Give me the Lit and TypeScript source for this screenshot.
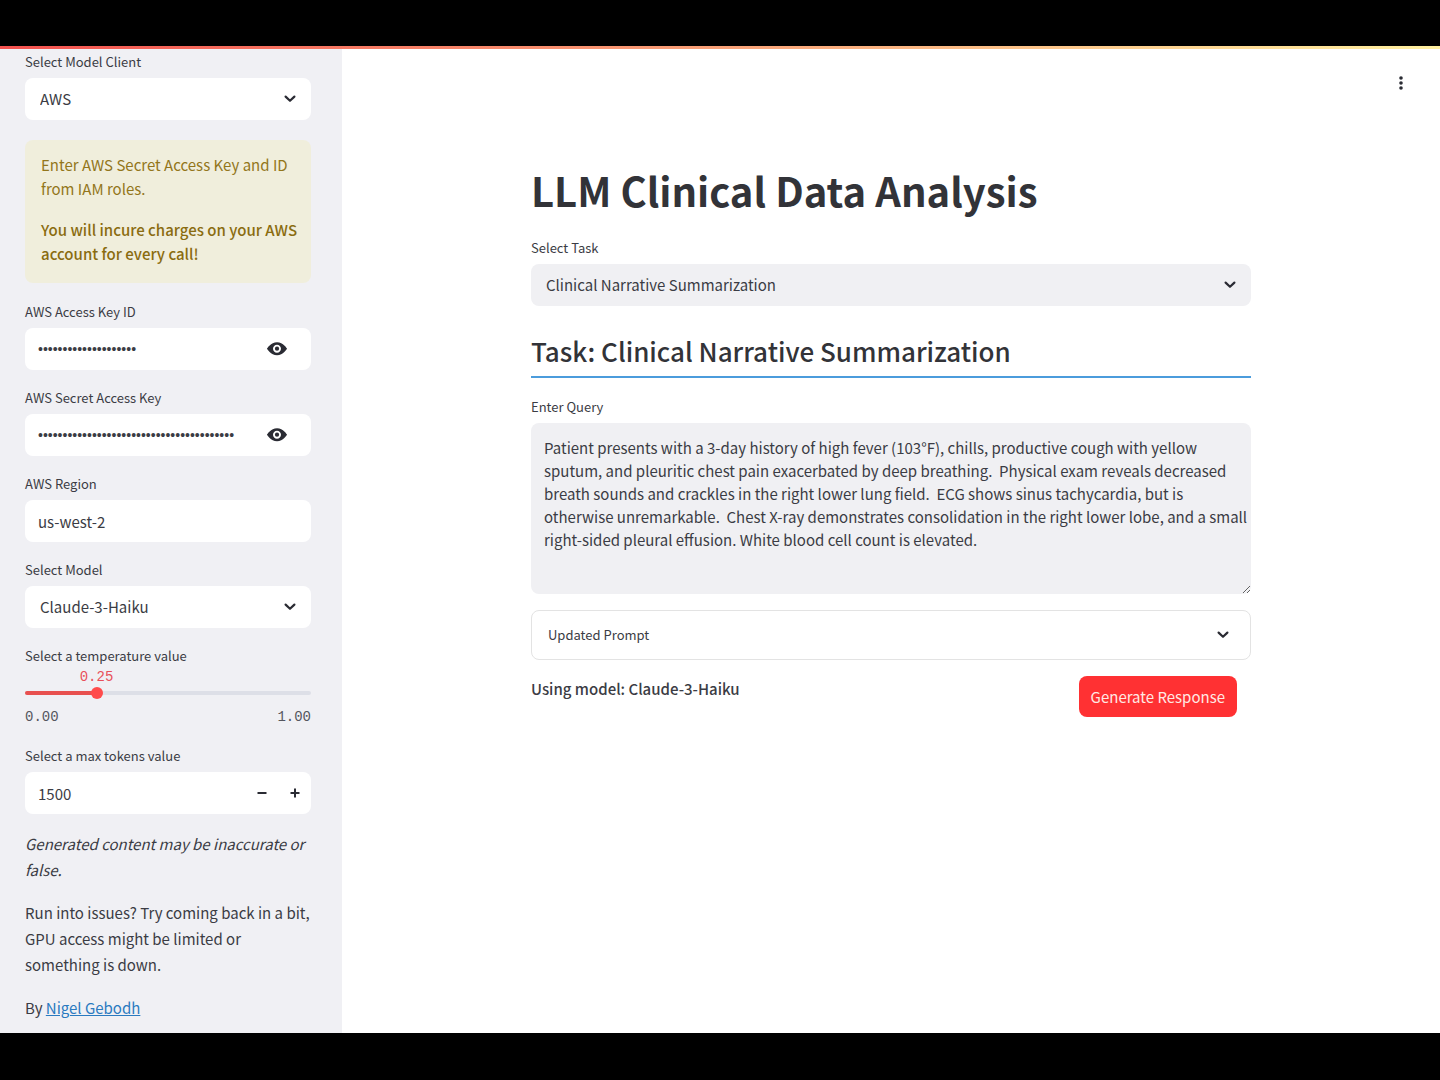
import { LitElement, html, css, svg } from "lit";
import { customElement, property, state } from "lit/decorators.js";

const chevron = html`<svg class="chevron" viewBox="0 0 12 8" width="12" height="8" aria-hidden="true">
  <path d="M1.6 1.6 L6 5.8 L10.4 1.6" fill="none" stroke="currentColor" stroke-width="2.2" stroke-linecap="round" stroke-linejoin="round" />
</svg>`;

const eye = html`<svg viewBox="0 0 8 8" width="20" height="20" aria-hidden="true">
  <path fill="currentColor" fill-rule="evenodd" d="M4.03 1.3C1.5 1.3 0 3.85 0 3.85s1.5 2.6 4.03 2.6C6.5 6.45 8 3.85 8 3.85S6.5 1.3 4.03 1.3zM4 2.25c.88 0 1.6.72 1.6 1.6S4.88 5.45 4 5.45 2.4 4.73 2.4 3.85 3.12 2.25 4 2.25z" />
  <circle cx="4" cy="3.85" r="0.85" fill="currentColor" />
</svg>`;

const base = css`
  * {
    box-sizing: border-box;
  }
  :host {
    display: block;
    color: #3b3c44;
    font-family: "Noto Sans CJK SC", "Open Sans", sans-serif;
    font-size: 15px;
    line-height: 24px;
  }
  input,
  select,
  textarea,
  button {
    font: inherit;
    color: inherit;
    margin: 0;
    border: 0;
    background: none;
    border-radius: 8px;
  }
  button {
    cursor: pointer;
  }
  svg {
    color: #2a2b33;
  }
  .label {
    display: block;
    font-size: 13px;
    line-height: 22px;
    margin-bottom: 5px;
  }
  .box {
    display: flex;
    align-items: center;
    height: 42px;
    border-radius: 8px;
    background: var(--field, #ffffff);
  }
`;

@customElement("select-field")
export class SelectField extends LitElement {
  @property() label = "";
  @property({ attribute: false }) options: string[] = [];

  static styles = [
    base,
    css`
      .box {
        display: grid;
        grid-template-columns: 1fr 12px;
        padding-right: 15px;
      }
      select {
        grid-area: 1 / 1 / 2 / 3;
        width: 100%;
        height: 42px;
        padding: 0 15px;
        appearance: none;
      }
      .chevron {
        grid-area: 1 / 2 / 2 / 3;
        pointer-events: none;
      }
    `,
  ];

  render() {
    return html`<label class="label" for="control">${this.label}</label>
      <div class="box">
        <select id="control">
          ${this.options.map((o) => html`<option>${o}</option>`)}
        </select>
        ${chevron}
      </div>`;
  }
}

@customElement("text-field")
export class TextField extends LitElement {
  @property() label = "";
  @property() value = "";
  @property({ type: Boolean }) secret = false;
  @state() private shown = false;

  static styles = [
    base,
    css`
      input {
        flex: 1;
        min-width: 0;
        height: 42px;
        padding: 0 13px;
      }
      .masked {
        font-family: "Liberation Sans", sans-serif;
        font-size: 14px;
      }
      .reveal {
        display: grid;
        place-items: center;
        width: 38px;
        height: 42px;
        margin-right: 15px;
        padding: 0;
      }
    `,
  ];

  render() {
    const masked = this.secret && !this.shown;
    return html`<label class="label" for="control">${this.label}</label>
      <div class="box">
        <input
          id="control"
          class=${masked ? "masked" : ""}
          type=${masked ? "password" : "text"}
          autocomplete="off"
          .value=${this.value}
        />
        ${this.secret
          ? html`<button class="reveal" type="button" aria-label="Show password text" @click=${() => (this.shown = !this.shown)}>
              ${eye}
            </button>`
          : null}
      </div>`;
  }
}

@customElement("slider-field")
export class SliderField extends LitElement {
  @property() label = "";
  @property({ type: Number }) value = 0;

  static styles = [
    base,
    css`
      .label {
        margin-bottom: 0;
      }
      .body {
        padding: 1px 0 2px;
        font-family: "Liberation Mono", monospace;
        font-size: 14px;
        line-height: 18px;
      }
      .values {
        position: relative;
        height: 18px;
      }
      .value {
        position: absolute;
        transform: translateX(-50%);
        color: #e8505a;
      }
      .rail {
        display: grid;
        align-items: center;
        height: 14px;
        margin-bottom: 8px;
      }
      .rail > * {
        grid-area: 1 / 1;
      }
      .track {
        height: 4px;
        border-radius: 4px;
        background: #dddfe7;
      }
      .fill {
        height: 4px;
        border-radius: 4px;
        background: #e8504f;
      }
      input {
        height: 12px;
        margin: 0 -6px;
        appearance: none;
      }
      input::-webkit-slider-thumb {
        appearance: none;
        width: 12px;
        height: 12px;
        border-radius: 50%;
        background: #ff4b4b;
      }
      .range {
        display: flex;
        justify-content: space-between;
        color: #55565e;
      }
    `,
  ];

  render() {
    return html`<label class="label" for="control">${this.label}</label>
      <div class="body">
        <div class="values">
          <output class="value" for="control" style="left:${this.value * 100}%">${this.value.toFixed(2)}</output>
        </div>
        <div class="rail">
          <div class="track"><div class="fill" style="width:${this.value * 100}%"></div></div>
          <input
            id="control"
            type="range"
            min="0"
            max="1"
            step="0.01"
            .value=${String(this.value)}
            @input=${(e: Event) => (this.value = Number((e.target as HTMLInputElement).value))}
          />
        </div>
        <div class="range"><span>0.00</span><span>1.00</span></div>
      </div>`;
  }
}

@customElement("number-field")
export class NumberField extends LitElement {
  @property() label = "";
  @property({ type: Number }) value = 0;

  static styles = [
    base,
    css`
      input {
        flex: 1;
        min-width: 0;
        height: 42px;
        padding: 0 13px;
        appearance: textfield;
      }
      input::-webkit-inner-spin-button {
        appearance: none;
      }
      .step {
        display: grid;
        place-items: center;
        width: 33px;
        height: 42px;
        padding: 0;
      }
    `,
  ];

  private icon(plus: boolean) {
    return html`<svg viewBox="0 0 10 10" width="10" height="10" aria-hidden="true">
      ${svg`<path d=${plus ? "M0.5 5H9.5M5 0.5V9.5" : "M0.5 5H9.5"} fill="none" stroke="currentColor" stroke-width="2" />`}
    </svg>`;
  }

  render() {
    return html`<label class="label" for="control">${this.label}</label>
      <div class="box">
        <input id="control" type="number" .value=${String(this.value)} />
        <button class="step" type="button" aria-label="Decrease" @click=${() => this.value--}>${this.icon(false)}</button>
        <button class="step" type="button" aria-label="Increase" @click=${() => this.value++}>${this.icon(true)}</button>
      </div>`;
  }
}

const query =
  "Patient presents with a 3-day history of high fever (103°F), chills, productive cough with yellow sputum, and pleuritic chest pain exacerbated by deep breathing.  Physical exam reveals decreased breath sounds and crackles in the right lower lung field.  ECG shows sinus tachycardia, but is otherwise unremarkable.  Chest X-ray demonstrates consolidation in the right lower lobe, and a small right-sided pleural effusion. White blood cell count is elevated.";

@customElement("app-root")
export class AppRoot extends LitElement {
  static styles = [
    base,
    css`
      :host {
        display: flex;
        flex-direction: column;
        box-sizing: border-box;
        min-height: 100vh;
        padding: 46px 0 47px;
        background: #000000;
      }
      .decoration {
        height: 3px;
        background: linear-gradient(90deg, #f4524f, #fff0a0);
      }
      .page {
        flex: 1;
        display: flex;
        background: #ffffff;
      }
      .sidebar {
        display: flex;
        flex-direction: column;
        gap: 17px;
        flex: 0 0 342px;
        padding: 2px 31px 12px 25px;
        background: #f0f0f4;
      }
      p {
        margin: 0;
      }
      .alert {
        display: flex;
        flex-direction: column;
        gap: 17px;
        margin: 3px 0 1px;
        padding: 13px 12px 17px 16px;
        border-radius: 8px;
        background: #f0eedc;
        color: #93761b;
      }
      .alert strong {
        color: #8a6c10;
      }
      strong {
        font-weight: 500;
      }
      .note {
        line-height: 26px;
      }
      a {
        color: #2a7ac0;
      }
      .content {
        flex: 1;
        display: flex;
        flex-direction: column;
        min-width: 0;
      }
      .toolbar {
        display: flex;
        justify-content: flex-end;
        padding: 19px 24px 0;
      }
      .menu {
        display: grid;
        place-items: center;
        width: 30px;
        height: 30px;
        padding: 0;
      }
      .main {
        --field: #f0f0f3;
        width: 100%;
        max-width: 720px;
        margin: 0 auto;
        padding-top: 64px;
      }
      h1 {
        margin: 0;
        font-size: 40px;
        line-height: 56px;
        font-weight: 700;
        color: #323338;
      }
      h2 {
        margin: 24px 0 18px;
        padding-bottom: 4px;
        border-bottom: 2px solid #4b9cdc;
        font-size: 26px;
        line-height: 42px;
        font-weight: 500;
        color: #323338;
      }
      .task {
        display: block;
        margin-top: 19px;
      }
      textarea {
        display: block;
        width: 100%;
        height: 171px;
        padding: 13px 3px 13px 13px;
        line-height: 23px;
        background: var(--field);
        resize: vertical;
      }
      .expander {
        margin-top: 16px;
        border: 1px solid #e3e3e3;
        border-radius: 8px;
      }
      summary {
        display: flex;
        justify-content: space-between;
        align-items: center;
        padding: 12px 21px 12px 16px;
        font-size: 13px;
        list-style: none;
        cursor: pointer;
      }
      .actions {
        display: flex;
        justify-content: space-between;
        align-items: flex-start;
        padding: 16px 14px 0 0;
      }
      .generate {
        height: 41px;
        padding: 0 12px;
        background: #ff3133;
        color: #ffe9e4;
      }
    `,
  ];

  render() {
    return html`
      <div class="decoration"></div>
      <div class="page">
        <aside class="sidebar">
          <select-field label="Select Model Client" .options=${["AWS"]}></select-field>
          <div class="alert" role="alert">
            <p>Enter AWS Secret Access Key and ID from IAM roles.</p>
            <p><strong>You will incure charges on your AWS account for every call!</strong></p>
          </div>
          <text-field label="AWS Access Key ID" value=${"x".repeat(20)} secret></text-field>
          <text-field label="AWS Secret Access Key" value=${"x".repeat(40)} secret></text-field>
          <text-field label="AWS Region" value="us-west-2"></text-field>
          <select-field label="Select Model" .options=${["Claude-3-Haiku"]}></select-field>
          <slider-field label="Select a temperature value" value="0.25"></slider-field>
          <number-field label="Select a max tokens value" value="1500"></number-field>
          <p class="note"><em>Generated content may be inaccurate or false.</em></p>
          <p class="note">Run into issues? Try coming back in a bit, GPU access might be limited or something is down.</p>
          <p class="note">By <a href="#">Nigel Gebodh</a></p>
        </aside>
        <div class="content">
          <header class="toolbar">
            <button class="menu" type="button" aria-label="Main menu">
              <svg viewBox="0 0 4 14" width="4" height="14" fill="currentColor" aria-hidden="true">
                <circle cx="2" cy="2" r="1.8" />
                <circle cx="2" cy="7" r="1.8" />
                <circle cx="2" cy="12" r="1.8" />
              </svg>
            </button>
          </header>
          <main class="main">
            <h1>LLM Clinical Data Analysis</h1>
            <select-field class="task" label="Select Task" .options=${["Clinical Narrative Summarization"]}></select-field>
            <h2>Task: Clinical Narrative Summarization</h2>
            <label class="label" for="query">Enter Query</label>
            <textarea id="query" spellcheck="false" .value=${query}></textarea>
            <details class="expander">
              <summary><span>Updated Prompt</span>${chevron}</summary>
            </details>
            <div class="actions">
              <strong class="note">Using model: Claude-3-Haiku</strong>
              <button class="generate" type="button">Generate Response</button>
            </div>
          </main>
        </div>
      </div>
    `;
  }
}
